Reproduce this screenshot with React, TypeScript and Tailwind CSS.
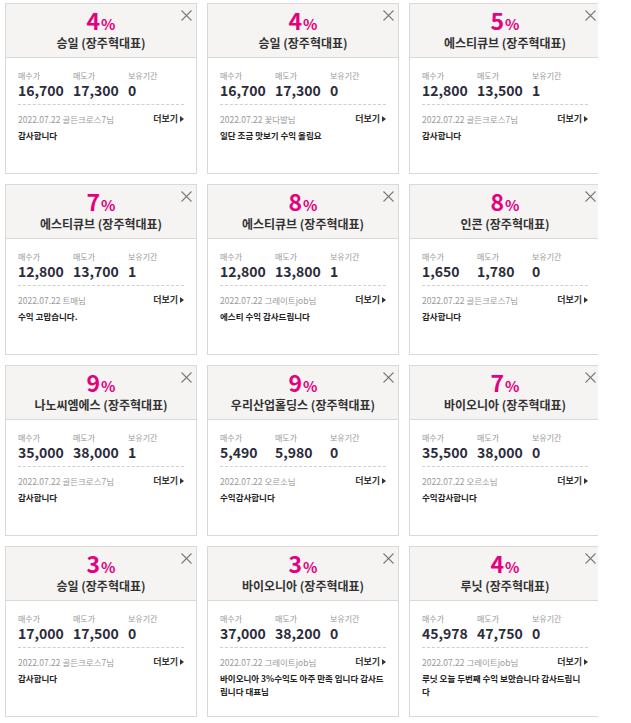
import React from "react";

type Item = {
  pct: number;
  name: string;
  buy: string;
  sell: string;
  hold: string;
  user: string;
  comment: string;
};

const items: Item[] = [
  { pct: 4, name: "승일", buy: "16,700", sell: "17,300", hold: "0", user: "골든크로스7님", comment: "감사합니다" },
  { pct: 4, name: "승일", buy: "16,700", sell: "17,300", hold: "0", user: "꽃다발님", comment: "일단 조금 맛보기 수익 올림요" },
  { pct: 5, name: "에스티큐브", buy: "12,800", sell: "13,500", hold: "1", user: "골든크로스7님", comment: "감사합니다" },
  { pct: 7, name: "에스티큐브", buy: "12,800", sell: "13,700", hold: "1", user: "트매님", comment: "수익 고맙습니다." },
  { pct: 8, name: "에스티큐브", buy: "12,800", sell: "13,800", hold: "1", user: "그레이트job님", comment: "에스티 수익 감사드립니다" },
  { pct: 8, name: "인콘", buy: "1,650", sell: "1,780", hold: "0", user: "골든크로스7님", comment: "감사합니다" },
  { pct: 9, name: "나노씨엠에스", buy: "35,000", sell: "38,000", hold: "1", user: "골든크로스7님", comment: "감사합니다" },
  { pct: 9, name: "우리산업홀딩스", buy: "5,490", sell: "5,980", hold: "0", user: "오르소님", comment: "수익감사합니다" },
  { pct: 7, name: "바이오니아", buy: "35,500", sell: "38,000", hold: "0", user: "오르소님", comment: "수익감사합니다" },
  { pct: 3, name: "승일", buy: "17,000", sell: "17,500", hold: "0", user: "골든크로스7님", comment: "감사합니다" },
  { pct: 3, name: "바이오니아", buy: "37,000", sell: "38,200", hold: "0", user: "그레이트job님", comment: "바이오니아 3%수익도 아주 만족 입니다 감사드립니다 대표님" },
  { pct: 4, name: "루닛", buy: "45,978", sell: "47,750", hold: "0", user: "그레이트job님", comment: "루닛 오늘 두번째 수익 보았습니다 감사드립니다" },
];

function Card({ it }: { it: Item }) {
  return (
    <div className="relative flex h-[171px] w-[192px] flex-col border border-[#d9d9d9] bg-white">
      <svg className="absolute right-[4px] top-[6px] h-[11px] w-[11px]" viewBox="0 0 11 11">
        <path d="M0.5 0.5 L10.5 10.5 M10.5 0.5 L0.5 10.5" stroke="#7a7a7a" strokeWidth="1.1" fill="none" />
      </svg>
      <div className="flex h-[54px] flex-col items-center border-b border-[#d9d9d9] bg-[#f5f4f2] pt-[5px]">
        <div className="flex h-[22px] items-baseline leading-[22px] text-[#e4007f]">
          <span className="text-[23px] font-bold">{it.pct}</span>
          <span className="ml-[1px] text-[15px] font-bold">%</span>
        </div>
        <div className="mt-[5px] h-[14px] text-[12px] font-bold leading-[14px] text-[#333]">
          {it.name} (장주혁대표)
        </div>
      </div>
      <div className="flex flex-col px-3 pt-[13px]">
        <div className="flex">
          <div className="w-[55px]">
            <div className="text-[8px] leading-[10px] text-[#999]">매수가</div>
            <div className="text-[14px] font-bold leading-[18px] text-[#2c2c3c]">{it.buy}</div>
          </div>
          <div className="w-[55px]">
            <div className="text-[8px] leading-[10px] text-[#999]">매도가</div>
            <div className="text-[14px] font-bold leading-[18px] text-[#2c2c3c]">{it.sell}</div>
          </div>
          <div className="w-[55px]">
            <div className="text-[8px] leading-[10px] text-[#999]">보유기간</div>
            <div className="text-[14px] font-bold leading-[18px] text-[#2c2c3c]">{it.hold}</div>
          </div>
        </div>
        <div className="mt-[5px] border-t border-dashed border-[#cfcfcf]" />
        <div className="mt-[7px] flex h-[14px] items-center justify-between leading-[14px]">
          <span className="text-[8.5px] text-[#999]">2022.07.22 {it.user}</span>
          <span className="flex items-center text-[9px] font-bold text-[#333]">
            더보기
            <svg className="ml-[2px] h-[6px] w-[4px]" viewBox="0 0 4 6">
              <path d="M0 0 L4 3 L0 6 Z" fill="#333" />
            </svg>
          </span>
        </div>
        <div className="mt-[3px] break-all text-[8.5px] font-bold leading-[13px] text-[#222]">{it.comment}</div>
      </div>
    </div>
  );
}

export default function App() {
  return (
    <div
      className="h-[723px] w-[631px] bg-white"
      style={{ fontFamily: "'Noto Sans CJK KR', 'Noto Sans', sans-serif" }}
    >
      <div className="w-[598px] overflow-hidden pl-[5px] pt-[3px]">
        <div className="grid w-[600px] grid-cols-[192px_192px_192px] gap-x-[10px] gap-y-[10px]">
          {items.map((it, i) => (
            <Card key={i} it={it} />
          ))}
        </div>
      </div>
    </div>
  );
}
